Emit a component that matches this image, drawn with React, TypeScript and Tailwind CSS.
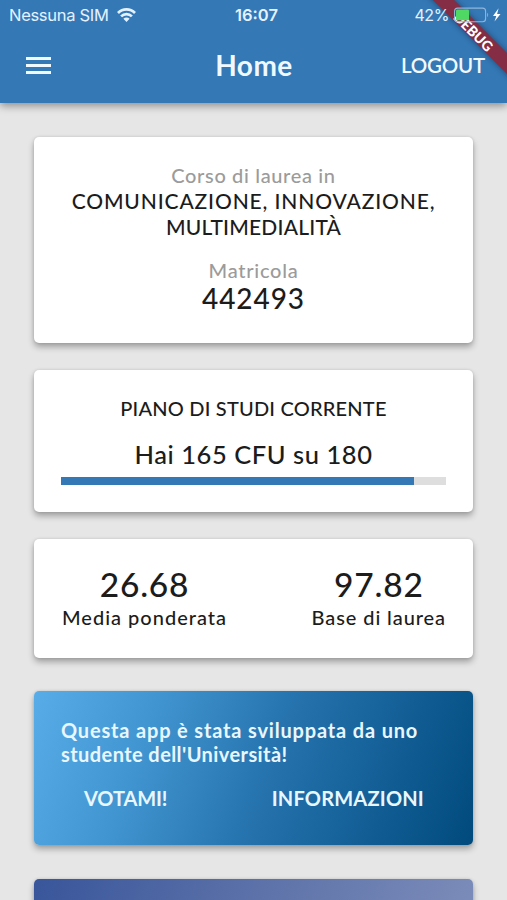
import type { ReactNode } from "react";
import clsx from "clsx";

const stats = [
  { value: "26.68", label: "Media ponderata", labelClass: "tracking-[1px]" },
  { value: "97.82", label: "Base di laurea", labelClass: "tracking-[0.9px]" },
];

const earned = 165;
const total = 180;

function WifiIcon() {
  return (
    <svg width="19" height="14" viewBox="0 0 19 14" fill="none" stroke="currentColor" strokeWidth="2.7">
      <path d="M1 5a12 12 0 0 1 17 0" />
      <path d="M4.1 8.4a7.6 7.6 0 0 1 10.8 0" />
      <path d="M9.5 14 6.4 10.8a4.4 4.4 0 0 1 6.2 0Z" fill="currentColor" stroke="none" />
    </svg>
  );
}

function Battery() {
  return (
    <svg width="48" height="16" viewBox="0 0 48 16" fill="none">
      <rect x="0.6" y="1.1" width="31" height="13.6" rx="3" stroke="#8fb6da" strokeWidth="1.1" />
      <rect x="2" y="2.5" width="13" height="10.8" rx="1.2" fill="#4fd964" />
      <path d="M33.2 5.6q2 2.3 0 4.6Z" fill="#8fb6da" />
      <path d="M44.6 1.2 39 8.9h3.3l-1.8 5.6 6-7.6h-3.4Z" fill="#fff" />
    </svg>
  );
}

function StatusBar() {
  return (
    <div className="grid h-[30px] grid-cols-3 items-center pl-[9px] pr-[5px] font-['Inter'] text-[16.5px] font-normal text-[#e4f2ff]">
      <div className="flex items-center gap-2">
        <span className="whitespace-nowrap tracking-[-0.3px]">Nessuna SIM</span>
        <WifiIcon />
      </div>
      <span className="pl-[2px] text-center font-semibold">16:07</span>
      <div className="flex items-center justify-end gap-[5px]">
        <span className="text-[16px] tracking-[-0.4px]">42%</span>
        <Battery />
      </div>
    </div>
  );
}

function DebugBanner() {
  return (
    <div className="pointer-events-none absolute right-0 top-0 h-24 w-24 overflow-hidden">
      <div className="absolute left-[-6px] top-[24px] h-[15px] w-[140px] rotate-45 bg-[#842d45] pr-[2px] pt-px text-center font-['Lato'] text-[14px] font-black leading-[16px] text-white shadow-[0_0_6px_rgba(0,0,0,0.4)]">
        DEBUG
      </div>
    </div>
  );
}

function Header() {
  return (
    <header className="relative h-[103px] shrink-0 bg-[#3478b6] text-[#f0f9ff] shadow-[0_3px_8px_rgba(0,0,0,0.38)]">
      <DebugBanner />
      <div className="relative">
        <StatusBar />
      </div>
      <div className="grid h-[70px] grid-cols-3 items-center pl-[26px] pr-[22px]">
        <button aria-label="Menu" className="flex w-[25px] flex-col gap-1">
          <span className="h-[3px] bg-current" />
          <span className="h-[3px] bg-current" />
          <span className="h-[3px] bg-current" />
        </button>
        <h1 className="pr-[3px] text-center text-[28px] font-bold leading-[32px] tracking-[0.5px]">Home</h1>
        <button className="text-right text-[20.5px] font-semibold tracking-[-0.2px]">LOGOUT</button>
      </div>
    </header>
  );
}

function Card({ className, children }: { className?: string; children?: ReactNode }) {
  return (
    <section
      className={clsx(
        "shrink-0 rounded-[5px] shadow-[0_4px_6px_rgba(0,0,0,0.3),0_0_3px_rgba(0,0,0,0.12)]",
        className,
      )}
    >
      {children}
    </section>
  );
}

export default function App() {
  return (
    <div className="flex h-[900px] w-[507px] flex-col overflow-hidden bg-[#e6e6e6] font-['Lato',sans-serif] font-medium text-[#1c1c1c]">
      <Header />
      <main className="flex flex-col pl-[34px] pr-[34px] pt-[34px]">
        <Card className="h-[206px] bg-white pt-[26px] text-center">
          <p className="text-[20px] leading-[25px] tracking-[0.65px] text-[#9b9b9b]">Corso di laurea in</p>
          <h2 className="whitespace-nowrap text-[21px] leading-[25.5px] tracking-[0.87px]">
            COMUNICAZIONE, INNOVAZIONE,
            <br />
            <span className="tracking-[0.2px]">MULTIMEDIALITÀ</span>
          </h2>
          <p className="mt-[18px] text-[20px] leading-[26px] tracking-[0.75px] text-[#9b9b9b]">Matricola</p>
          <p className="text-[28px] leading-[31px] tracking-[0.9px]">442493</p>
        </Card>

        <Card className="mt-[27px] h-[142px] bg-white px-[27px] pt-[25px] text-center">
          <h2 className="text-[20px] leading-[26px] tracking-[0.2px]">PIANO DI STUDI CORRENTE</h2>
          <p className="mt-[17px] text-[25.5px] leading-[32px] tracking-[0.55px]">
            Hai {earned} CFU su {total}
          </p>
          <div className="mt-[7px] h-[8px] bg-[#dedede]">
            <div className="h-full bg-[#3478b6]" style={{ width: `${(earned / total) * 100}%` }} />
          </div>
        </Card>

        <Card className="mt-[27px] flex h-[119px] items-start justify-between bg-white pl-[28px] pr-[27px] pt-[25px]">
          {stats.map((s) => (
            <div key={s.label} className="text-center">
              <p className="text-[33.5px] leading-[40px] tracking-[0.8px]">{s.value}</p>
              <p className={clsx("text-[20px] leading-[26px]", s.labelClass)}>{s.label}</p>
            </div>
          ))}
        </Card>

        <Card className="mt-[33px] h-[154px] bg-[linear-gradient(110deg,#58ade8_0%,#4499d4_22%,#2471ac_55%,#004a7d_100%)] px-[27px] pt-[27px] font-bold text-[#e8f7ff]">
          <p className="whitespace-nowrap text-[20px] leading-[24px] tracking-[0.83px]">
            Questa app è stata sviluppata da uno
            <br />
            <span className="tracking-[0.42px]">studente dell'Università!</span>
          </p>
          <div className="mt-[19px] flex justify-between pl-[23px] pr-[22px] text-[20px] leading-[26px]">
            <button className="tracking-[-0.1px]">VOTAMI!</button>
            <button className="tracking-[0.2px]">INFORMAZIONI</button>
          </div>
        </Card>

        <Card className="mt-[34px] h-[154px] bg-[linear-gradient(110deg,#39569b_0%,#5f74aa_50%,#8291bd_100%)]" />
      </main>
    </div>
  );
}
